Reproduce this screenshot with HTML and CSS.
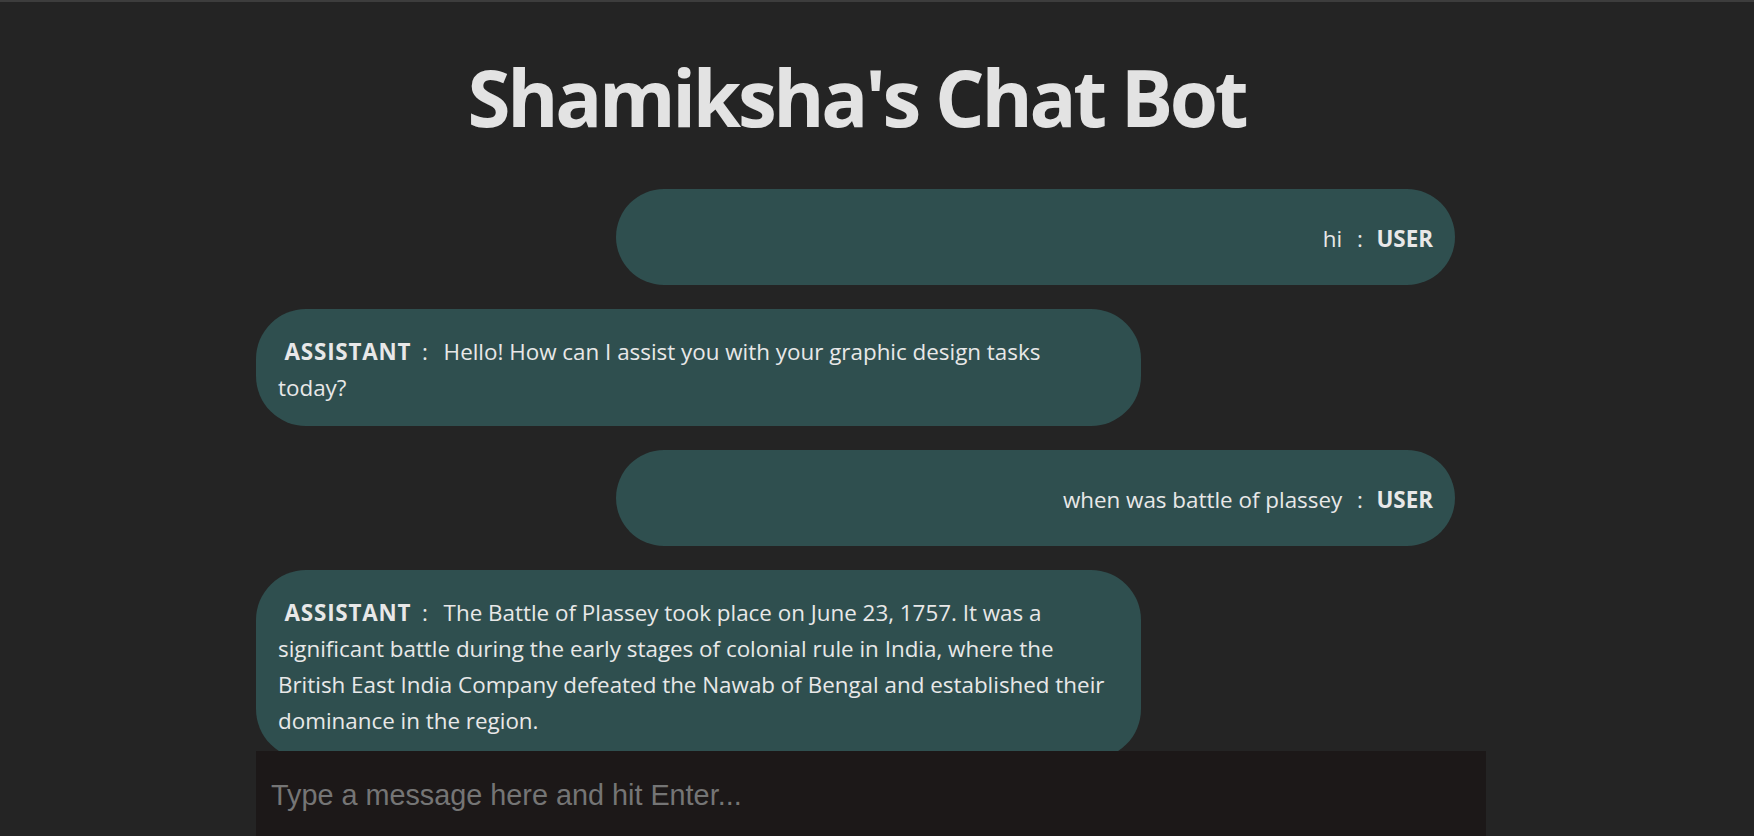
FILE: index.html
```html
<!DOCTYPE html>
<html lang="en">
<head>
<meta charset="utf-8">
<title>Shamiksha's Chat Bot</title>
<link rel="stylesheet" href="styles.css">
</head>
<body>
<div class="app">
  <header class="header">
    <h1 class="title">Shamiksha's Chat Bot</h1>
  </header>
  <main class="messages">
    <div class="bubble user">hi&nbsp;&nbsp;<span class="sep">:</span>&nbsp; <b class="role">USER</b></div>
    <div class="bubble assistant"><b class="role">&nbsp;ASSISTANT</b> <span class="sep">:</span>&nbsp; Hello! How can I assist you with your graphic design tasks today?</div>
    <div class="bubble user">when was battle of plassey&nbsp; <span class="sep">:</span>&nbsp; <b class="role">USER</b></div>
    <div class="bubble assistant"><b class="role">&nbsp;ASSISTANT</b> <span class="sep">:</span>&nbsp; The Battle of Plassey took place on June 23, 1757. It was a significant battle during the early stages of colonial rule in India, where the British East India Company defeated the Nawab of Bengal and established their dominance in the region.</div>
  </main>
  <div class="composer">
    <input class="composer-input" type="text" placeholder="Type a message here and hit Enter...">
  </div>
</div>
</body>
</html>
```
FILE: styles.css
```css
* { box-sizing: border-box; }
html, body { margin: 0; padding: 0; }
body {
  background: #242424;
  color: #e6e6e6;
  font-family: "Open Sans", "Noto Sans", sans-serif;
  overflow: hidden;
}
.app {
  height: 100vh;
  display: flex;
  flex-direction: column;
  border-top: 2px solid #3d3d3d;
}
.header {
  padding-top: 55px;
  padding-right: 41px;
  margin-bottom: 52px;
}
.title {
  margin: 0;
  text-align: center;
  font-size: 78px;
  line-height: 80px;
  font-weight: 700;
  letter-spacing: -3.3px;
  color: #e3e3e3;
}
.messages {
  flex: 1;
  min-height: 0;
  overflow: hidden;
  width: 1230px;
  margin-left: 256px;
  display: flex;
  flex-direction: column;
  gap: 24px;
}
.bubble {
  flex-shrink: 0;
  background: #2f4f4f;
  border-radius: 50px;
  font-size: 22.4px;
  line-height: 36px;
  color: #e8e8e8;
}
.role { font-weight: 700; }
.assistant .role { letter-spacing: 0.8px; }
.sep { margin: 0 2px 0 3px; }
.assistant .sep { margin: 0 4px 0 5px; }
.user {
  align-self: flex-end;
  margin-right: 31px;
  width: 839px;
  text-align: right;
  padding: 32px 22px 28px;
}
.assistant {
  align-self: flex-start;
  width: 885px;
  padding: 25px 32px 20px 22px;
}
.composer {
  flex-shrink: 0;
  width: 1230px;
  margin-left: 256px;
  height: 85px;
}
.composer-input {
  display: block;
  width: 100%;
  height: 100%;
  border: none;
  outline: none;
  background: #1c1818;
  color: #e6e6e6;
  font-family: "Liberation Sans", Arial, sans-serif;
  font-size: 28.8px;
  padding: 3px 15px 0;
}
.composer-input::placeholder { color: #757575; }
```
